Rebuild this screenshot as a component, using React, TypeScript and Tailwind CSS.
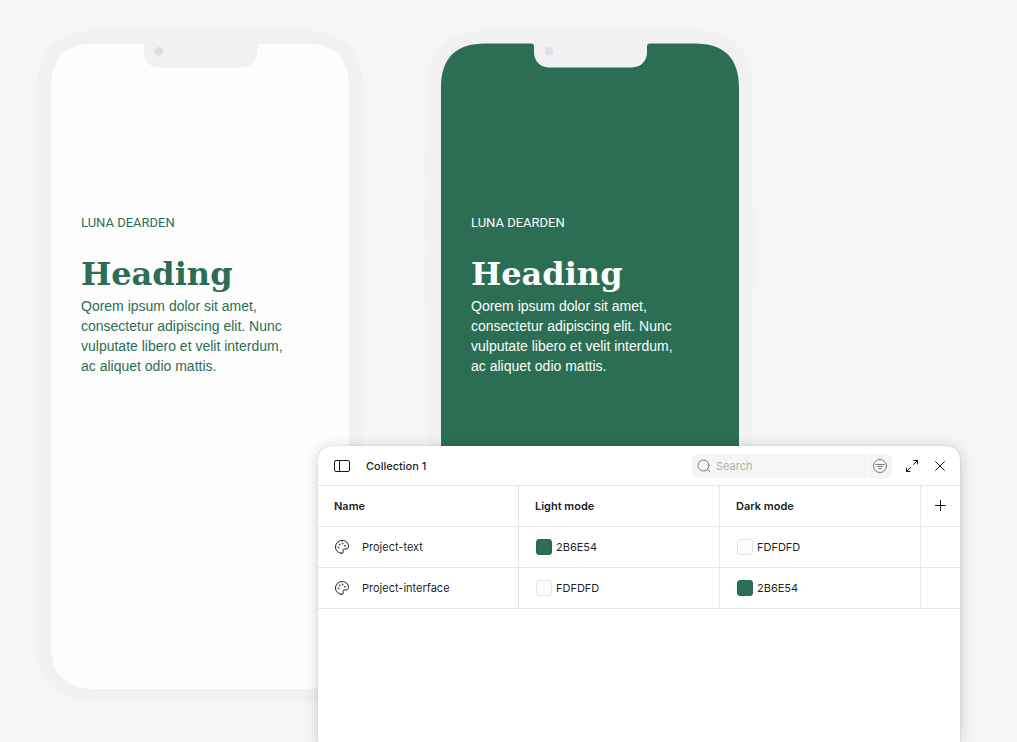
import { ReactNode } from "react";

type Variable = {
  name: string;
  light: string;
  dark: string;
};

const variables: Variable[] = [
  { name: "Project-text", light: "2B6E54", dark: "FDFDFD" },
  { name: "Project-interface", light: "FDFDFD", dark: "2B6E54" },
];

const PhoneFrame = () => (
  <svg
    viewBox="0 0 332 672"
    className="absolute inset-0 h-full w-full"
    aria-hidden="true"
  >
    {/* side buttons */}
    <g fill="#f2f2f3">
      <rect x="0" y="122" width="6" height="23" rx="1.5" />
      <rect x="0" y="167" width="6" height="46" rx="1.5" />
      <rect x="0" y="226" width="6" height="47" rx="1.5" />
      <rect x="326" y="183" width="6" height="73" rx="1.5" />
    </g>
    <path
      fill="#f1f1f4"
      d="M3 60C3 20 23 0 63 0H269C309 0 329 20 329 60V612C329 652 309 672 269 672H63C23 672 3 652 3 612Z"
    />
    {/* screen, cut out around the notch */}
    <path
      fill="currentColor"
      d="M17 58C17 28.300 31.700 13.600 61 13.600H107C109 13.600 110 14.600 110 16.600V22C110 31 116 37.400 125 37.400H208C217 37.400 223 31 223 22V16.600C223 14.600 224 13.600 226 13.600H271C300.300 13.600 315 28.300 315 58V615C315 644.300 300.300 659 271 659H61C31.700 659 17 644.300 17 615Z"
    />
    <circle cx="125" cy="21.300" r="4.300" fill="#dedee5" />
  </svg>
);

const Phone = ({ dark = false }: { dark?: boolean }) => {
  return (
    <article
      className={`relative h-[672px] w-[332px] shrink-0 ${dark ? "text-[#2b6e54]" : "text-[#fdfdfd]"}`}
    >
      <PhoneFrame />
      <div
        className={`relative px-[47px] pt-[183px] ${dark ? "text-[#fdfdfd]" : "text-[#2b6e54]"}`}
      >
        <p className="font-['Roboto',sans-serif] text-[13px] leading-5">
          LUNA DEARDEN
        </p>
        <h2 className="mt-[19px] font-['DejaVu_Serif',serif] text-[32px] leading-[44px] font-bold">
          Heading
        </h2>
        <p className="w-[220px] font-['Liberation_Sans',sans-serif] text-sm leading-5">
          Qorem ipsum dolor sit amet, consectetur adipiscing elit. Nunc
          vulputate libero et velit interdum, ac aliquet odio mattis.
        </p>
      </div>
    </article>
  );
};

const Icon = ({ children }: { children: ReactNode }) => (
  <svg
    viewBox="0 0 16 16"
    className="size-4 shrink-0"
    fill="none"
    stroke="currentColor"
    strokeLinecap="round"
    strokeLinejoin="round"
    aria-hidden="true"
  >
    {children}
  </svg>
);

const PaletteIcon = () => (
  <Icon>
    <path d="M7.300 14.300C3.900 13.700 1.500 11.200 1.500 8A6.500 6.500 0 0 1 8 1.500C11.800 1.500 14.500 4 14.500 7.300C14.500 9 13.500 10 12 10H10.300C9.300 10 8.900 10.700 9 11.600L9.200 12.800C9.300 13.800 8.600 14.500 7.300 14.300Z" />
    <g fill="currentColor" stroke="none" opacity="0.7">
      <circle cx="4.500" cy="8.500" r="1" />
      <circle cx="5.600" cy="5.600" r="1" />
      <circle cx="8.600" cy="4.600" r="1" />
      <circle cx="11" cy="6.700" r="1" />
    </g>
  </Icon>
);

const Swatch = ({ hex }: { hex: string }) => (
  <div className="flex items-center gap-1">
    <span
      className={`size-4 rounded-[3px] border ${hex === "FDFDFD" ? "border-[#e4e4e4]" : "border-[#286850]"}`}
      style={{ backgroundColor: `#${hex}` }}
    />
    {hex}
  </div>
);

const VariablesPanel = () => {
  return (
    <section className="absolute right-[57px] bottom-0 h-[296px] w-[642px] rounded-t-[13px] bg-white font-['Inter',sans-serif] text-[11px] leading-4 text-black/90 shadow-[0_2px_14px_rgba(0,0,0,0.18),0_0_1px_rgba(0,0,0,0.3)]">
      <header className="flex h-10 items-center border-b border-[#e6e6e6] pr-2 pl-3">
        <button type="button" aria-label="Toggle sidebar" className="p-1">
          <Icon>
            <rect x="0.500" y="2.500" width="15" height="11" rx="1.500" />
            <path d="M5.500 2.500v11" />
          </Icon>
        </button>
        <h1 className="ml-3 font-medium">Collection 1</h1>
        <div className="ml-auto flex gap-px">
          <label className="flex h-6 w-[175px] items-center gap-1 rounded-l-[5px] bg-[#f5f5f5] px-1 text-[#777]">
            <Icon>
              <circle cx="7.500" cy="7.500" r="5.500" />
              <path d="m11.500 11.500 2.500 2.500" />
            </Icon>
            <input
              type="search"
              aria-label="Search variables"
              placeholder="Search"
              className="min-w-0 flex-1 bg-transparent text-black outline-none placeholder:text-[#b0b0b0]"
            />
          </label>
          <button
            type="button"
            aria-label="Filter"
            className="rounded-r-[5px] bg-[#f5f5f5] p-1 text-[#777]"
          >
            <Icon>
              <circle cx="8" cy="8" r="6.500" />
              <path d="M4 6.500h8M5.500 8.500h5M7 10.500h2" />
            </Icon>
          </button>
        </div>
        <button type="button" aria-label="Expand" className="ml-2 p-1">
          <Icon>
            <path d="M10 2.500h3.500V6M13.500 2.500 9.500 6.500M2.500 10v3.500H6M2.500 13.500l4-4" />
          </Icon>
        </button>
        <button type="button" aria-label="Close" className="ml-1 p-1">
          <Icon>
            <path d="m3.500 3.500 9 9M12.500 3.500l-9 9" />
          </Icon>
        </button>
      </header>

      <table className="w-full table-fixed border-separate border-spacing-0 text-left">
        <colgroup>
          <col className="w-[201px]" />
          <col className="w-[201px]" />
          <col className="w-[201px]" />
          <col />
        </colgroup>
        <thead>
          <tr className="h-[41px]">
            <th className="border-r border-b border-[#e6e6e6] pl-4 font-semibold">
              Name
            </th>
            <th className="border-r border-b border-[#e6e6e6] pl-4 font-semibold">
              Light mode
            </th>
            <th className="border-r border-b border-[#e6e6e6] pl-4 font-semibold">
              Dark mode
            </th>
            <th className="border-b border-[#e6e6e6]">
              <button
                type="button"
                aria-label="Add mode"
                className="mx-auto block p-1"
              >
                <Icon>
                  <path d="M7.500 2.500v10M2.500 7.500h10" />
                </Icon>
              </button>
            </th>
          </tr>
        </thead>
        <tbody>
          {variables.map((variable) => (
            <tr key={variable.name} className="h-[41px]">
              <td className="border-r border-b border-[#e6e6e6] pl-4">
                <div className="flex items-center gap-3">
                  <PaletteIcon />
                  {variable.name}
                </div>
              </td>
              <td className="border-r border-b border-[#e6e6e6] pl-[17px]">
                <Swatch hex={variable.light} />
              </td>
              <td className="border-r border-b border-[#e6e6e6] pl-[17px]">
                <Swatch hex={variable.dark} />
              </td>
              <td className="border-b border-[#e6e6e6]" />
            </tr>
          ))}
        </tbody>
      </table>
    </section>
  );
};

export default function App() {
  return (
    <main className="relative min-h-screen overflow-hidden bg-[#f5f5f5]">
      <div className="flex gap-[58px] px-[34px] pt-[30px]">
        <Phone />
        <Phone dark />
      </div>
      <VariablesPanel />
    </main>
  );
}
